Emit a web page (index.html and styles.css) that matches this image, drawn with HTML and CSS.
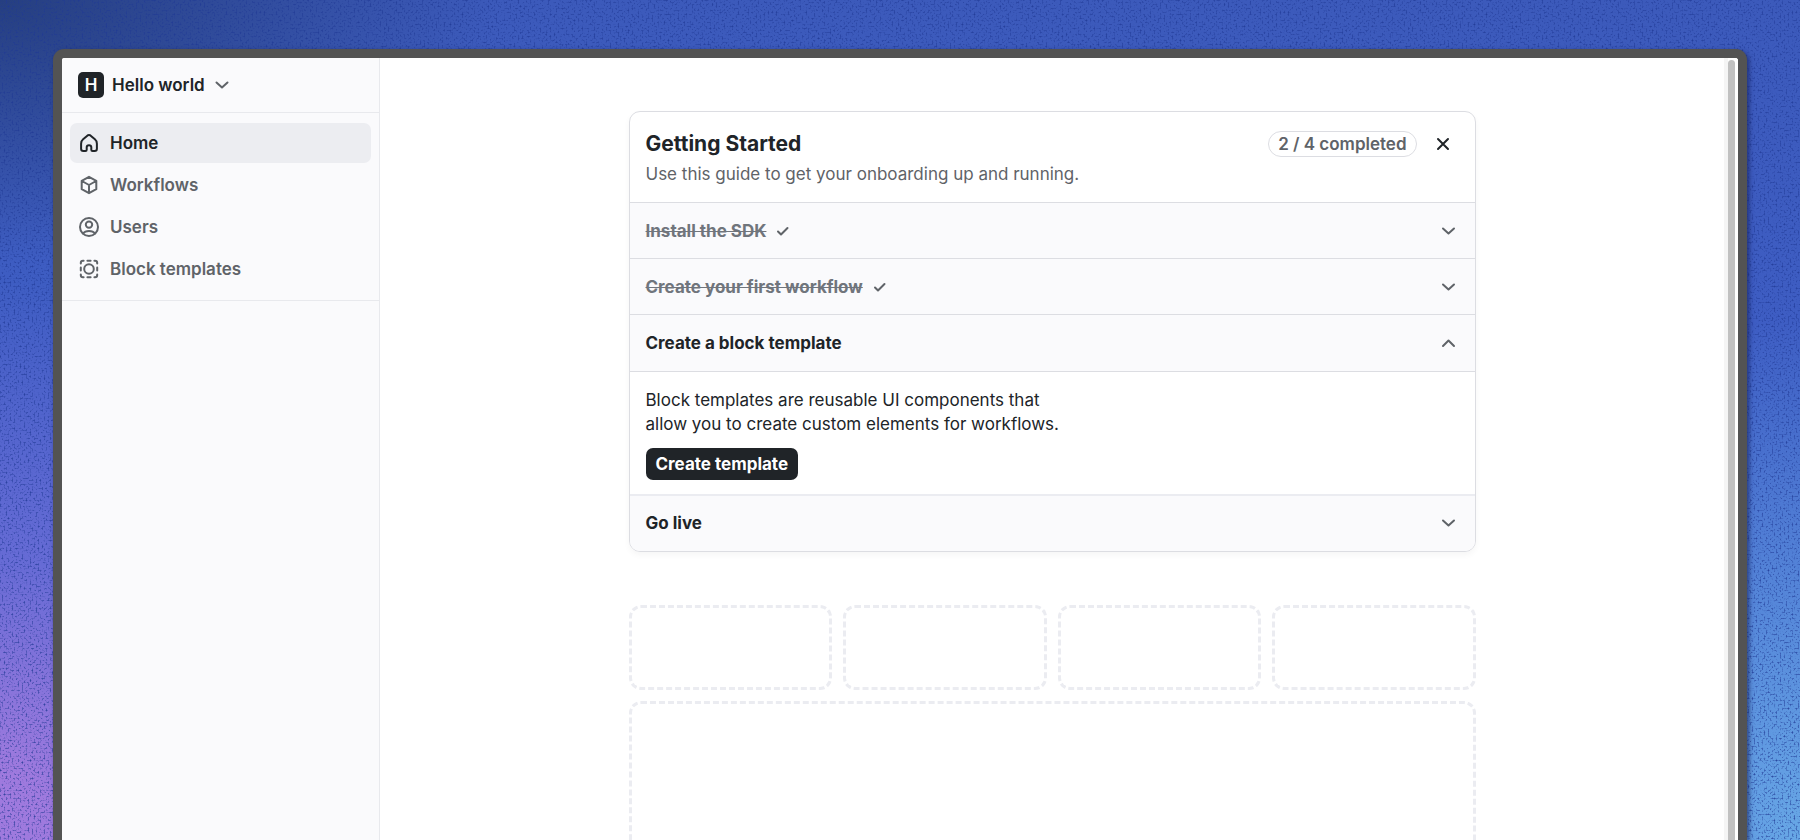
FILE: index.html
```html
<!DOCTYPE html>
<html lang="en">
<head>
  <meta charset="UTF-8" />
  <meta name="viewport" content="width=device-width, initial-scale=1.0"/>
  <title>Hello world - Home</title>
  <link rel="stylesheet" href="styles.css">
</head>
<body>
  <svg class="grain" aria-hidden="true">
    <filter id="noise" color-interpolation-filters="sRGB">
      <feTurbulence type="fractalNoise" baseFrequency="0.5" numOctaves="2" seed="4" />
      <feColorMatrix values="0 0 0 0 0.12  0 0 0 0 0.22  0 0 0 0 0.58  2.4 0 0 0 -1.2" />
    </filter>
    <rect width="100%" height="100%" filter="url(#noise)" />
  </svg>

  <div class="window">
    <aside class="sidebar">
      <button class="workspace" type="button">
        <span class="workspace-logo">H</span>
        <span>Hello world</span>
        <svg class="icon" width="18" height="20" viewBox="0 0 18 20"><path d="M3.500 7.500l5.500 5 5.500-5" /></svg>
      </button>
      <nav class="nav">
        <a class="nav-item active" href="#">
          <svg class="icon" width="22" height="22" viewBox="0 0 22 22"><path d="M11 2.900c.5 0 1 .2 1.400.5l4.500 3.900c1.300 1.100 2 2.700 2 4.400v5.100c0 1.300-1 2.300-2.300 2.300h-2c-.8 0-1.300-.5-1.300-1.300v-2.500c0-1.200-1-2.100-2.300-2.100s-2.300.9-2.300 2.100v2.500c0 .8-.5 1.300-1.300 1.300h-2c-1.300 0-2.300-1-2.300-2.300v-5.100c0-1.700.7-3.300 2-4.400l4.500-3.900c.4-.3.9-.5 1.400-.5z" /></svg>
          Home
        </a>
        <a class="nav-item" href="#">
          <svg class="icon" width="22" height="22" viewBox="0 0 22 22"><path d="M11 2.800l7.300 4v8.400l-7.300 4-7.300-4V6.800zM3.900 7l7.100 4 7.100-4M11 11v8" /></svg>
          Workflows
        </a>
        <a class="nav-item" href="#">
          <svg class="icon" width="22" height="22" viewBox="0 0 22 22"><circle cx="11" cy="11" r="9" /><circle cx="11" cy="8.600" r="3.200" /><path d="M5 17.500c1.200-1.700 3.400-2.600 6-2.600s4.800.9 6 2.600" /></svg>
          Users
        </a>
        <a class="nav-item" href="#">
          <svg class="icon" width="22" height="22" viewBox="0 0 22 22"><circle cx="11" cy="11" r="4.800" /><path d="M2.800 5.600V5c0-1.200 1-2.200 2.200-2.200h.6M16.400 2.800h.6c1.200 0 2.200 1 2.200 2.200v.6M19.200 16.400v.6c0 1.200-1 2.200-2.200 2.200h-.6M5.600 19.200H5c-1.200 0-2.200-1-2.200-2.200v-.6M9.400 2.800h3.200M9.400 19.200h3.200M2.800 9.400v3.200M19.200 9.400v3.200" /></svg>
          Block templates
        </a>
      </nav>
    </aside>

    <main class="main">
      <section class="guide">
        <header class="guide-header">
          <div>
            <h1 class="guide-title">Getting Started</h1>
            <p class="guide-subtitle">Use this guide to get your onboarding up and running.</p>
          </div>
          <div class="guide-status">
            <span class="badge">2 / 4 completed</span>
            <button class="close" type="button" aria-label="Close">
              <svg class="icon" width="20" height="20" viewBox="0 0 20 20"><path d="M5 5l10 10M15 5L5 15" /></svg>
            </button>
          </div>
        </header>

        <button class="step done" type="button">
          <span class="step-name">Install the SDK</span>
          <svg class="icon check" width="14" height="14" viewBox="0 0 14 14"><path d="M2 7.500l3 3L11.500 4" /></svg>
          <svg class="icon chevron" width="20" height="20" viewBox="0 0 20 20"><path d="M4 7.500l5.500 5 5.500-5" /></svg>
        </button>
        <button class="step done" type="button">
          <span class="step-name">Create your first workflow</span>
          <svg class="icon check" width="14" height="14" viewBox="0 0 14 14"><path d="M2 7.500l3 3L11.500 4" /></svg>
          <svg class="icon chevron" width="20" height="20" viewBox="0 0 20 20"><path d="M4 7.500l5.500 5 5.500-5" /></svg>
        </button>
        <button class="step open" type="button" aria-expanded="true">
          <span class="step-name">Create a block template</span>
          <svg class="icon chevron" width="20" height="20" viewBox="0 0 20 20"><path d="M4 13l5.500-5.500L15 13" /></svg>
        </button>
        <div class="step-body">
          <p>Block templates are reusable UI components that<br>allow you to create custom elements for workflows.</p>
          <button class="primary" type="button">Create template</button>
        </div>
        <button class="step last" type="button">
          <span class="step-name">Go live</span>
          <svg class="icon chevron" width="20" height="20" viewBox="0 0 20 20"><path d="M4 7.500l5.500 5 5.500-5" /></svg>
        </button>
      </section>

      <div class="placeholders">
        <div class="placeholder"></div>
        <div class="placeholder"></div>
        <div class="placeholder"></div>
        <div class="placeholder"></div>
        <div class="placeholder large"></div>
      </div>
    </main>

    <div class="scrollbar"><div class="thumb"></div></div>
  </div>
</body>
</html>
```

FILE: styles.css
```css
* {
  box-sizing: border-box;
}

body {
  margin: 0;
  height: 100vh;
  overflow: hidden;
  padding: 49px 53px 0;
  display: flex;
  font-family: Inter, sans-serif;
  font-size: 17px;
  line-height: 24px;
  color: #202428;
  background:
    radial-gradient(ellipse 500px 260px at 0 0, #263f80, transparent),
    radial-gradient(ellipse 500px 560px at 0 100%, #9f7ade 12%, rgba(112, 110, 216, 0.8) 50%, transparent),
    radial-gradient(ellipse 400px 520px at 100% 100%, #68a8e6, transparent),
    linear-gradient(#3c5abb, #4162d0);
}

h1, p {
  margin: 0;
}

button {
  font: inherit;
  color: inherit;
  border: none;
  background: none;
  padding: 0;
  text-align: left;
  cursor: pointer;
}

.grain {
  position: absolute;
  inset: 0;
  width: 100%;
  height: 100%;
}

.icon {
  flex: none;
  fill: none;
  stroke: currentColor;
  stroke-width: 2;
  stroke-linecap: round;
  stroke-linejoin: round;
}

.window {
  position: relative;
  flex: 1;
  display: flex;
  border: 9px solid #535353;
  border-bottom: none;
  border-radius: 11px 11px 0 0;
  background: #fff;
  box-shadow: 2px 2px 5px rgba(20, 30, 90, 0.7);
}

.sidebar {
  width: 318px;
  background: #fafafc;
  border-right: 1px solid #e8e9ed;
  border-radius: 3px 0 0 0;
}

.workspace {
  display: flex;
  align-items: center;
  gap: 8px;
  width: 100%;
  height: 55px;
  padding: 0 16px;
  font-weight: 600;
  border-bottom: 1px solid #e8e9ed;
}

.workspace .icon {
  color: #5f6368;
}

.workspace-logo {
  width: 26px;
  height: 26px;
  line-height: 26px;
  border-radius: 5px;
  background: #202428;
  color: #fff;
  text-align: center;
}

.nav {
  display: flex;
  flex-direction: column;
  gap: 2px;
  padding: 10px 8px 11px;
  border-bottom: 1px solid #e8e9ed;
}

.nav-item {
  display: flex;
  align-items: center;
  gap: 10px;
  height: 40px;
  padding: 0 8px;
  border-radius: 7px;
  color: #5f6368;
  font-weight: 600;
  text-decoration: none;
}

.nav-item.active {
  background: #ecedf1;
  color: #202428;
}

.main {
  flex: 1;
  padding: 53px 24px 0;
  overflow: hidden;
}

.guide,
.placeholders {
  max-width: 847px;
  margin: 0 auto 53px;
}

.guide {
  border: 1px solid #dcdde2;
  border-radius: 11px;
  overflow: hidden;
  box-shadow: 0 3px 6px rgba(0, 0, 0, 0.04);
}

.guide-header {
  display: flex;
  justify-content: space-between;
  padding: 16px 16px 14px;
}

.guide-title {
  font-size: 21px;
  line-height: 32px;
  font-weight: 700;
}

.guide-subtitle {
  line-height: 28px;
  color: #5f6368;
}

.guide-status {
  display: flex;
  align-items: center;
  gap: 16px;
  height: 32px;
}

.badge {
  padding: 0 9px;
  border: 1px solid #dcdde2;
  border-radius: 13px;
  color: #5f6368;
  font-weight: 600;
}

.close {
  display: flex;
  padding-right: 6px;
}

.step {
  display: flex;
  align-items: center;
  gap: 10px;
  width: 100%;
  height: 56px;
  padding: 0 16px;
  border-top: 1px solid #dcdde2;
  background: #fafafc;
  font-weight: 700;
}

.step.open,
.step.last {
  height: 57px;
}

.step.last {
  padding-bottom: 2px;
  border-top: 2px solid #ebecf1;
}

.done .step-name {
  color: #70757c;
  text-decoration: line-through;
}

.check,
.chevron {
  color: #5f6368;
}

.chevron {
  margin-left: auto;
}

.step-body {
  padding: 16px 16px 14px;
  border-top: 1px solid #dcdde2;
}

.primary {
  display: block;
  margin-top: 12px;
  height: 32px;
  padding: 0 10px;
  border-radius: 7px;
  background: #202428;
  color: #fff;
  font-weight: 700;
}

.placeholders {
  display: grid;
  grid-template-columns: repeat(4, 1fr);
  gap: 11px;
}

.placeholder {
  height: 85px;
  border: 3px dashed #ebecf1;
  border-radius: 12px;
}

.placeholder.large {
  grid-column: 1 / -1;
  height: 340px;
}

.scrollbar {
  width: 14px;
  padding: 2px 3px 0 4px;
  background: linear-gradient(90deg, #f5f5f5 4px, #fff 4px);
  border-radius: 0 3px 0 0;
}

.thumb {
  height: 100%;
  border-radius: 4px 4px 0 0;
  background: #c1c1c1;
}
```
